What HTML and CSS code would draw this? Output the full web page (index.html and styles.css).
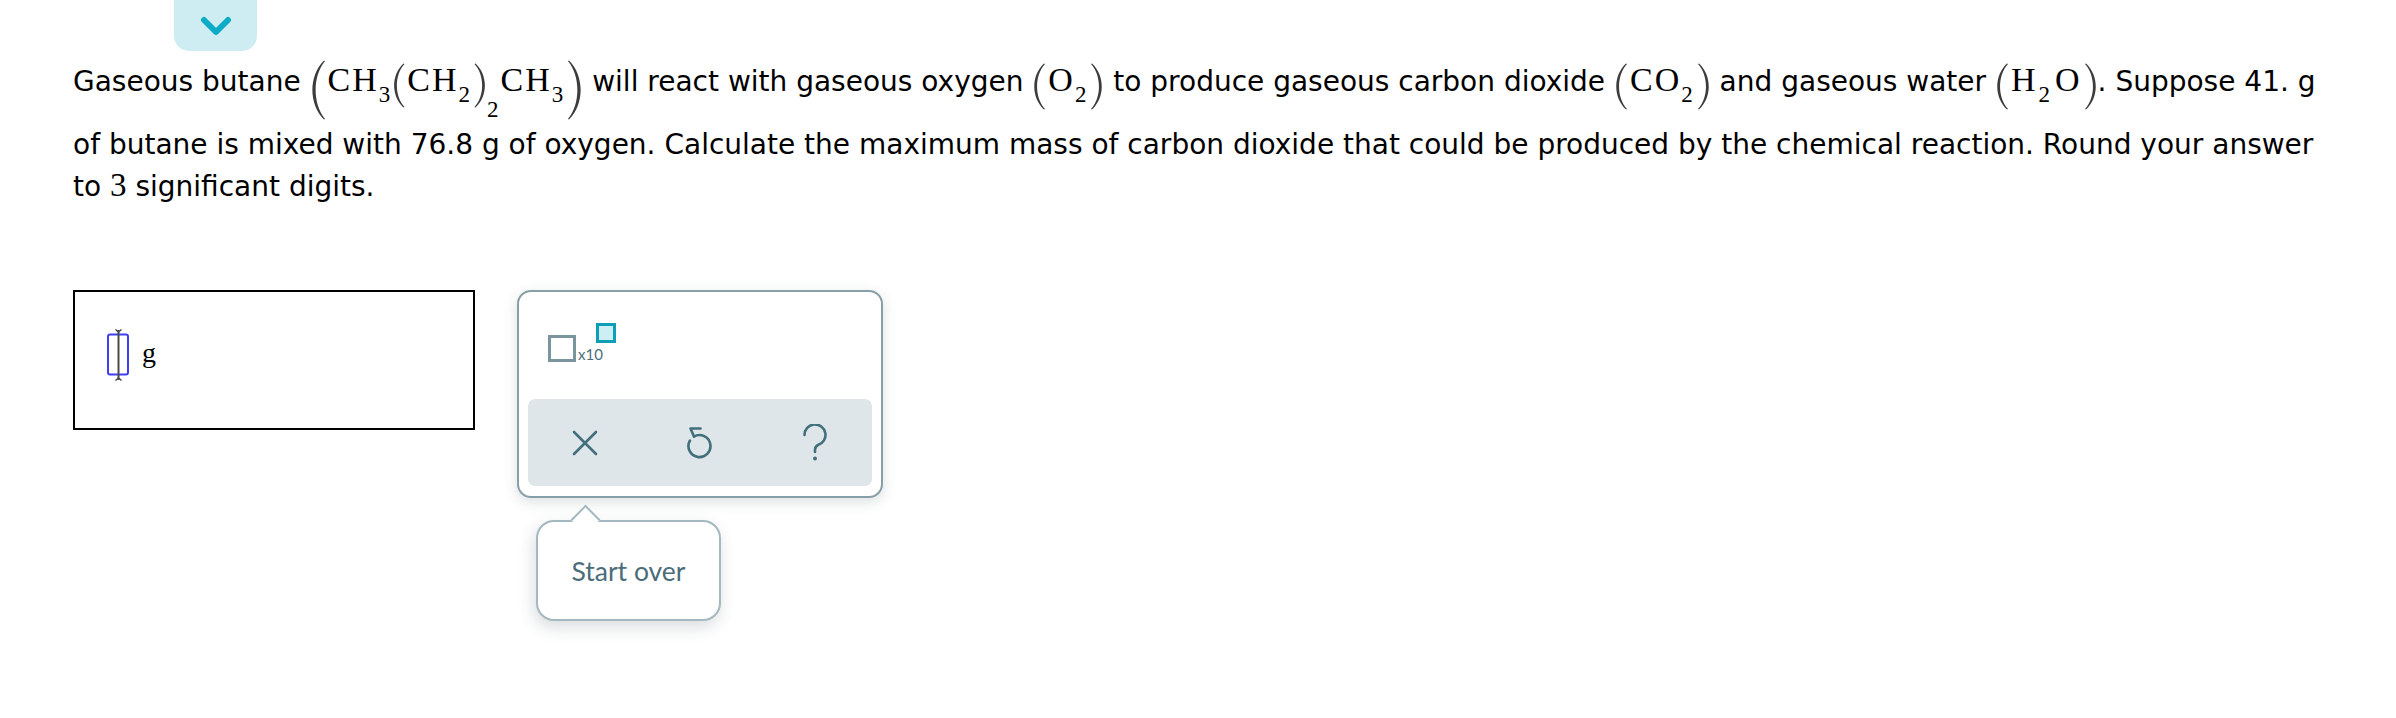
FILE: index.html
```html
<!DOCTYPE html>
<html>
<head>
<meta charset="utf-8">
<link rel="stylesheet" href="styles.css">
</head>
<body>
<div class="page">
  <div class="tab">
    <svg class="chev" width="32" height="20" viewBox="0 0 32 20"><polyline points="4,4 16,16 28,4" fill="none" stroke="#0eabc7" stroke-width="6" stroke-linecap="round" stroke-linejoin="round"/></svg>
  </div>
  <p class="question">Gaseous butane <span class="f"><svg class="p big" width="16" height="60" viewBox="0 0 16 60"><path d="M14,0.5 C-1.5,16 -1.5,44 14,59.5 L15,59 C2.5,44 2.5,16 15,1 Z"/></svg>CH<sub>3</sub><svg class="p mid" width="13" height="45" viewBox="0 0 13 45"><path d="M11.5,0.5 C-1,12 -1,33 11.5,44.5 L12.5,44 C2.3,33 2.3,12 12.5,1 Z"/></svg>CH<sub>2</sub><svg class="p mid close" width="13" height="45" viewBox="0 0 13 45"><path d="M11.5,0.5 C-1,12 -1,33 11.5,44.5 L12.5,44 C2.3,33 2.3,12 12.5,1 Z"/></svg><sub class="low">2</sub>CH<sub>3</sub><svg class="p big close" width="16" height="60" viewBox="0 0 16 60"><path d="M14,0.5 C-1.5,16 -1.5,44 14,59.5 L15,59 C2.5,44 2.5,16 15,1 Z"/></svg></span> will react with gaseous oxygen <span class="f"><svg class="p sm" width="14" height="47" viewBox="0 0 14 47"><path d="M12,0.5 C-1,12.5 -1,34.5 12,46.5 L13,46 C2.4,34.5 2.4,12.5 13,1 Z"/></svg>O<sub>2</sub><svg class="p sm close" width="14" height="47" viewBox="0 0 14 47"><path d="M12,0.5 C-1,12.5 -1,34.5 12,46.5 L13,46 C2.4,34.5 2.4,12.5 13,1 Z"/></svg></span> to produce gaseous carbon dioxide <span class="f sp"><svg class="p sm" width="14" height="47" viewBox="0 0 14 47"><path d="M12,0.5 C-1,12.5 -1,34.5 12,46.5 L13,46 C2.4,34.5 2.4,12.5 13,1 Z"/></svg>CO<sub>2</sub><svg class="p sm close" width="14" height="47" viewBox="0 0 14 47"><path d="M12,0.5 C-1,12.5 -1,34.5 12,46.5 L13,46 C2.4,34.5 2.4,12.5 13,1 Z"/></svg></span> and gaseous water <span class="f sp"><svg class="p sm" width="14" height="47" viewBox="0 0 14 47"><path d="M12,0.5 C-1,12.5 -1,34.5 12,46.5 L13,46 C2.4,34.5 2.4,12.5 13,1 Z"/></svg>H<sub class="gap">2</sub>O<svg class="p sm close" width="14" height="47" viewBox="0 0 14 47"><path d="M12,0.5 C-1,12.5 -1,34.5 12,46.5 L13,46 C2.4,34.5 2.4,12.5 13,1 Z"/></svg></span>. Suppose 41. g of butane is mixed with 76.8 g of oxygen. Calculate the maximum mass of carbon dioxide that could be produced by the chemical reaction. Round your answer to <span class="n">3</span> significant digits.</p>

  <div class="answer-row">
    <div class="answer-box">
      <svg class="cursor" width="23" height="52" viewBox="0 0 23 52">
        <rect x="1" y="5.5" width="20" height="40" rx="2" fill="none" stroke="#3f3ff2" stroke-width="2"/>
        <line x1="11.5" y1="1" x2="11.5" y2="51" stroke="#4a4a4a" stroke-width="2"/>
        <path d="M8.5,0.5 L11.5,3 L14.5,0.5 M8.5,51.5 L11.5,49 L14.5,51.5" fill="none" stroke="#4a4a4a" stroke-width="1.4"/>
      </svg>
      <span class="unit">g</span>
    </div>

    <div class="panel-wrap">
      <div class="panel">
        <div class="tools">
          <span class="sci"><span class="sci-box"></span><span class="sci-x">x10</span><span class="sci-exp"></span></span>
        </div>
        <div class="actions">
          <span class="act">
            <svg width="26" height="26" viewBox="0 0 26 26"><path d="M2,2 L24,24 M24,2 L2,24" stroke="#426f7c" stroke-width="2.6" stroke-linecap="round"/></svg>
          </span>
          <span class="act">
            <svg width="28" height="36" viewBox="0 0 28 36"><path d="M8,11.5 A11,11 0 1 1 3.97,15.5" fill="none" stroke="#426f7c" stroke-width="2.6" stroke-linecap="round"/><path d="M14.5,3.5 L4.5,3.5 L8,11.5" fill="none" stroke="#426f7c" stroke-width="2.6" stroke-linecap="round" stroke-linejoin="round"/></svg>
          </span>
          <span class="act">
            <svg width="26" height="38" viewBox="0 0 26 38"><path d="M2.5,11 A10.5,10.5 0 1 1 16,21 C13.8,22 13,23.5 13,26 L13,28" fill="none" stroke="#426f7c" stroke-width="2.6" stroke-linecap="round"/><circle cx="13" cy="34.5" r="2" fill="#426f7c"/></svg>
          </span>
        </div>
      </div>
      <div class="tooltip"><span class="tip-text">Start over</span></div>
    </div>
  </div>
</div>
</body>
</html>
```

FILE: styles.css
```css
html, body {
  margin: 0;
  padding: 0;
  background: #ffffff;
}

.page {
  padding: 0 0 90px 73px;
}

.tab {
  margin-left: 101px;
  width: 83px;
  height: 51px;
  background: #ceedf3;
  border-radius: 0 0 15px 15px;
  display: flex;
  align-items: center;
  justify-content: center;
}

.chev {
  display: block;
}

.question {
  margin: 9px 0 0 0;
  width: 2255px;
  font-family: "DejaVu Sans", Verdana, sans-serif;
  font-size: 28px;
  line-height: 40px;
  color: #000;
}

.f {
  font-family: "Liberation Serif", "Times New Roman", serif;
  font-size: 34px;
  letter-spacing: 2px;
  white-space: nowrap;
}

.f sub {
  font-size: 23px;
  vertical-align: -11px;
  line-height: 0;
}

.f sub.low {
  vertical-align: -26px;
}

.f sub.gap {
  margin: 0 3px 0 1px;
}

.n {
  font-family: "Liberation Serif", "Times New Roman", serif;
  font-size: 33px;
}

.p {
  display: inline-block;
  fill: #3c3c3c;
  margin-right: 2px;
}

.p.close {
  transform: scaleX(-1);
  margin-right: 0;
  margin-left: 2px;
}

.p.big {
  vertical-align: -34px;
  margin-bottom: 5px;
}

.p.mid {
  vertical-align: -17px;
}

.p.sm {
  vertical-align: -19px;
}

.answer-row {
  display: flex;
  align-items: flex-start;
  gap: 42px;
  margin-top: 83px;
}

.answer-box {
  box-sizing: border-box;
  width: 402px;
  height: 140px;
  border: 2px solid #000;
  padding: 37px 0 0 32px;
  display: flex;
  align-items: flex-start;
  gap: 12px;
}

.cursor {
  display: block;
}

.unit {
  font-family: "Liberation Serif", "Times New Roman", serif;
  font-size: 28px;
  line-height: 28px;
  margin-top: 10px;
}

.panel-wrap {
  display: flex;
  flex-direction: column;
  align-items: flex-start;
}

.panel {
  box-sizing: border-box;
  width: 366px;
  height: 208px;
  border: 2px solid #87a0a8;
  border-radius: 14px;
  padding: 0 9px 10px 9px;
  display: flex;
  flex-direction: column;
  box-shadow: 0 4px 14px rgba(40, 60, 70, 0.16);
  background: #fff;
}

.tools {
  height: 107px;
  box-sizing: border-box;
  padding: 31px 0 0 20px;
}

.sci {
  display: inline-flex;
  align-items: flex-start;
}

.sci-box {
  box-sizing: border-box;
  width: 28px;
  height: 27px;
  border: 3px solid #7a959e;
  margin-top: 12px;
}

.sci-x {
  font-family: "Lato", "Open Sans", sans-serif;
  font-size: 15px;
  line-height: 15px;
  color: #4a6f7c;
  margin-top: 24px;
  margin-left: 2px;
}

.sci-exp {
  box-sizing: border-box;
  width: 20px;
  height: 20px;
  border: 3px solid #0e9fb7;
  background: #cdeef4;
  margin-left: -7px;
}

.actions {
  flex: 1;
  background: #dfe6e9;
  border-radius: 7px;
  display: flex;
}

.act {
  flex: 1;
  display: flex;
  align-items: center;
  justify-content: center;
}

.tooltip {
  position: relative;
  margin: 22px 0 0 19px;
  box-sizing: border-box;
  width: 185px;
  height: 101px;
  border: 2px solid #a4b8bf;
  border-radius: 18px;
  background: #fff;
  box-shadow: -2px 6px 16px rgba(40, 60, 70, 0.18);
  display: flex;
  align-items: center;
  justify-content: center;
}

.tip-text {
  font-family: "Lato", "Open Sans", sans-serif;
  font-size: 26.5px;
  color: #4b6c7a;
}

.tooltip::before {
  content: "";
  position: absolute;
  box-sizing: border-box;
  width: 21px;
  height: 21px;
  left: 36.5px;
  top: -12.6px;
  background: #fff;
  border-left: 2px solid #a4b8bf;
  border-top: 2px solid #a4b8bf;
  transform: rotate(45deg);
}
```
